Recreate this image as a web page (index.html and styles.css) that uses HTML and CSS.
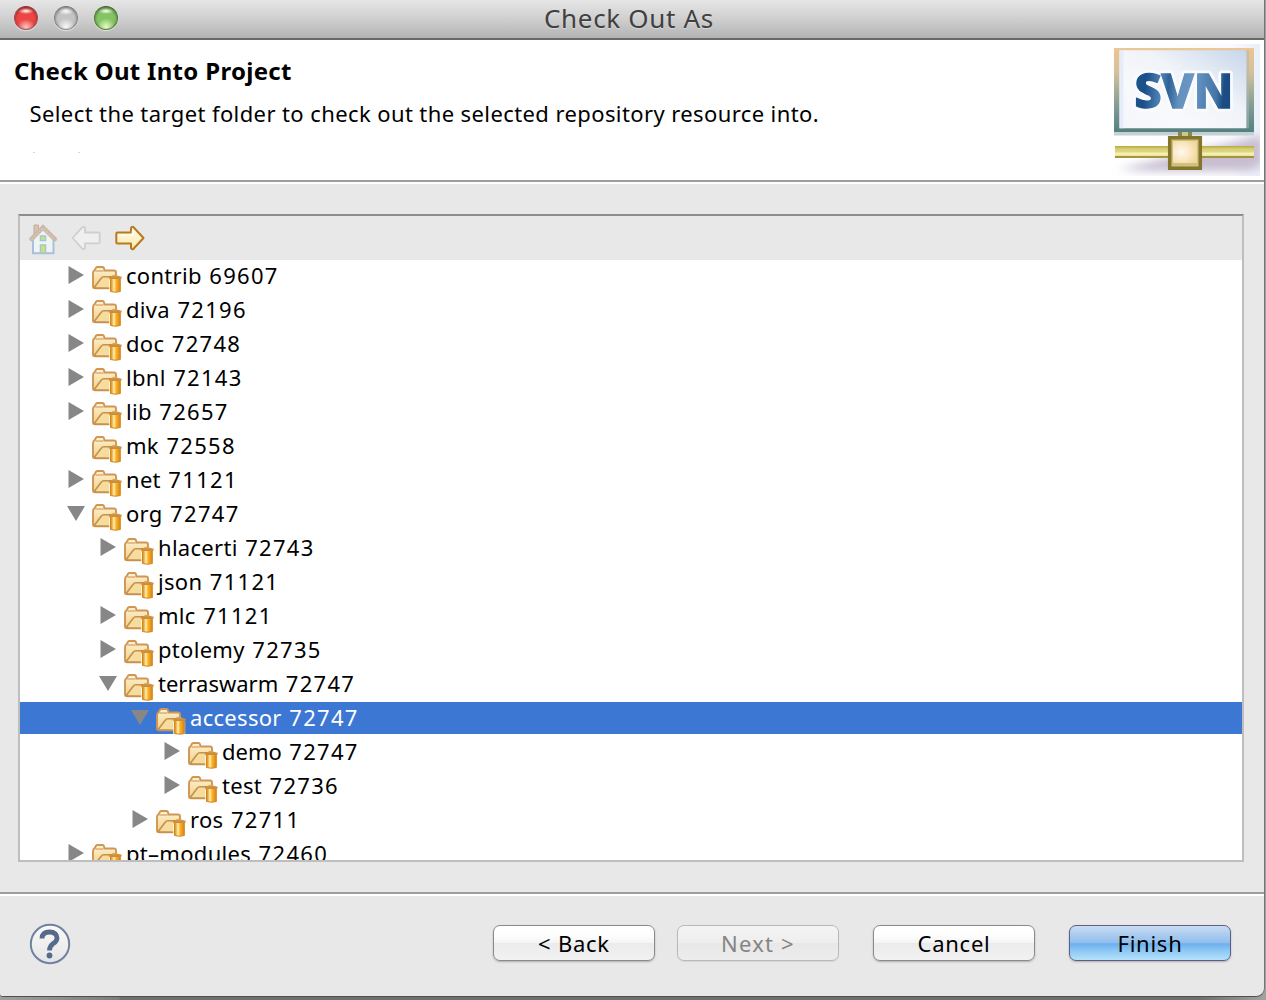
FILE: index.html
```html
<!DOCTYPE html>
<html lang="en">
<head>
<meta charset="utf-8">
<title>Check Out As</title>
<link rel="stylesheet" href="styles.css">
</head>
<body>
<svg class="defs" width="0" height="0" aria-hidden="true">
  <defs>
    <linearGradient id="paper" x1="0" y1="0" x2="0" y2="1"><stop offset="0" stop-color="#fdf3d2"/><stop offset="1" stop-color="#f3cf86"/></linearGradient>
    <linearGradient id="pale" x1="0" y1="0" x2="0" y2="1"><stop offset="0" stop-color="#fffdf0"/><stop offset="1" stop-color="#fbe9a8"/></linearGradient>
    <linearGradient id="cyl" x1="0" y1="0" x2="1" y2="0"><stop offset="0" stop-color="#d98a1c"/><stop offset=".15" stop-color="#f0a63a"/><stop offset=".35" stop-color="#fff3b8"/><stop offset=".55" stop-color="#fcb62c"/><stop offset="1" stop-color="#dc8212"/></linearGradient>
    <symbol id="folder" viewBox="0 0 30 28">
      <path d="M1 20V7q0-2 1.500-2.500L4 1.800q.5-.8 1.500-.8h5q1.200 0 1.500 1.200L12.500 4.500H22q2 0 2 2V14L20 22.200H3q-2 0-2-2z" fill="url(#paper)" stroke="#cf9655" stroke-width="1.900"/>
      <path d="M3.500 5h8" stroke="#dca567" stroke-width="1.300"/>
      <path d="M2 21.800 9 12.400q1.200-1.600 3-1.600h14.500L21 22.300z" fill="#f6dc9d" stroke="#c4914e" stroke-width="1.600"/>
      <path d="M17.200 13.500h12v13.500h-12z" fill="#fff" opacity=".85"/>
      <path d="M18.500 12.500h9.800V25.500q-4.900 1.500-9.800 0z" fill="url(#cyl)" stroke="#cf871f" stroke-width="1"/>
      <path d="M16.800 11.600h12.800" stroke="#cc8f3f" stroke-width="2.200"/>
      <path d="M20.500 9.700h5" stroke="#d9a457" stroke-width="1.600"/>
    </symbol>
  </defs>
</svg>
<div class="desktop">
<main class="window">
  <header class="titlebar">
    <div class="lights"><i class="light red"></i><i class="light gray"></i><i class="light green"></i></div>
    <span class="title">Check Out As</span>
  </header>

  <section class="banner">
    <div class="banner-text">
      <h1>Check Out Into Project</h1>
      <p>Select the target folder to check out the selected repository resource into.</p>
    </div>
    <svg class="logo" width="156" height="136" viewBox="1108 42 156 136">
      <defs>
        <linearGradient id="frame" x1="0" y1="0" x2="0" y2="1"><stop offset="0" stop-color="#ecc592"/><stop offset=".3" stop-color="#d3c09a"/><stop offset=".65" stop-color="#88a094"/><stop offset="1" stop-color="#54807f"/></linearGradient>
        <linearGradient id="screen" x1="0" y1="1" x2="1" y2="0"><stop offset="0" stop-color="#f4f6fb"/><stop offset=".3" stop-color="#f8f9fb"/><stop offset=".6" stop-color="#f0f3f8"/><stop offset="1" stop-color="#c6d6ea"/></linearGradient>
        <linearGradient id="bar" x1="0" y1="0" x2="0" y2="1"><stop offset="0" stop-color="#b5a83f"/><stop offset=".25" stop-color="#d8cf75"/><stop offset=".5" stop-color="#e0d87e"/><stop offset=".6" stop-color="#f7f3c3"/><stop offset=".8" stop-color="#ece5a0"/><stop offset=".85" stop-color="#a3953a"/><stop offset="1" stop-color="#a3953a"/></linearGradient>
        <linearGradient id="glow" x1="0" y1="0" x2="1" y2="0"><stop offset="0" stop-color="#fff"/><stop offset=".8" stop-color="#fbfbff"/><stop offset="1" stop-color="#e8eef9"/></linearGradient>
        <linearGradient id="letters" gradientUnits="userSpaceOnUse" x1="1136" y1="80" x2="1232" y2="90"><stop offset="0" stop-color="#1d548b"/><stop offset=".1" stop-color="#1b4f88"/><stop offset=".26" stop-color="#4f82b4"/><stop offset=".34" stop-color="#2f6298"/><stop offset=".46" stop-color="#6390bd"/><stop offset=".6" stop-color="#6b98c4"/><stop offset=".72" stop-color="#5585b5"/><stop offset=".84" stop-color="#4576a8"/><stop offset=".92" stop-color="#1b4c84"/><stop offset="1" stop-color="#1b4c84"/></linearGradient>
        <radialGradient id="node" cx=".35" cy=".5" r=".7"><stop offset="0" stop-color="#fff8ee"/><stop offset=".5" stop-color="#fbe8c6"/><stop offset="1" stop-color="#f0d79a"/></radialGradient>
        <filter id="soft" x="-20%" y="-50%" width="140%" height="200%"><feGaussianBlur stdDeviation="4"/></filter>
        <clipPath id="edge"><path d="M1110 44h150v132h-150z"/></clipPath>
      </defs>
      <path d="M1110 44h150v132h-150z" fill="url(#glow)"/>
      <g clip-path="url(#edge)"><path d="M1118 169 1160 160 1200 150 1262 136v30l-14 5h-96z" fill="#c8bed0" filter="url(#soft)"/></g>
      <path d="M1114 131h140v4.500h-140z" fill="#c4d2d6"/>
      <path d="M1114 48h140v84h-140z" fill="url(#frame)"/>
      <path d="M1114 48h140v2.200h-140z" fill="#ebc797"/>
      <path d="M1119.500 50.200h127v78h-127z" fill="url(#screen)"/>
      <path d="M1119.500 50.200h4v78h-4z" fill="#e6edf9"/>
      <path d="M1246.500 50.200h2.500v78h-2.500z" fill="#a9b9bc" opacity=".5"/>
      <text class="svn halo" x="1134.500" y="107.500" textLength="99" lengthAdjust="spacingAndGlyphs">SVN</text>
      <text class="svn" x="1134.500" y="107.500" textLength="99" lengthAdjust="spacingAndGlyphs" fill="url(#letters)" stroke="url(#letters)">SVN</text>
      <path d="M1178 132h14v5h-14z" fill="#8c8742"/><path d="M1182 132h6v4h-6z" fill="#c9c894"/>
      <path d="M1115 146h139v12h-139z" fill="url(#bar)"/>
      <path d="M1169.700 137.700h30.600v30.600h-30.600z" fill="#cfbf80" stroke="#83762b" stroke-width="3.500"/>
      <path d="M1173 141h24v22h-24z" fill="url(#node)"/>
    </svg>
  </section>

  <section class="body">
    <div class="panel">
      <div class="toolbar">
        <svg class="home" width="30" height="32" viewBox="28 223 30 32">
          <path d="M34 238 43 228l10 10v14.500H33.500z" fill="#eef3f3"/>
          <path d="M33 238v15.300h20.500V238" fill="none" stroke="#a9bfda" stroke-width="2"/>
          <path d="M34 225h4.500v6L34 235z" fill="#d5c3b5" stroke="#c5ad99" stroke-width="1"/>
          <path d="M31.500 239 43 227.500 54.800 239.200" fill="none" stroke="#cbb8aa" stroke-width="4.500" stroke-linecap="round"/>
          <path d="M31.500 239.500 43 228l11.500 11.500" fill="none" stroke="#dccabd" stroke-width="1.500" stroke-dasharray="2 1.500"/>
          <path d="M40.500 236h5v4.500h-5z" fill="#d3df78" stroke="#a3c8cf" stroke-width="1.500"/>
          <path d="M40.500 245h5v8h-5z" fill="#d3df78" stroke="#a3c8cf" stroke-width="1.500"/>
        </svg>
        <svg class="arrow" width="32" height="28" viewBox="0 0 32 28"><path d="M2.500 14 12.500 3.200q1.500-1 2.500.8V8.500H28.500q1.200 0 1.200 1.200v8.500q0 1.200-1.200 1.200H15V24q-1 1.800-2.500.8z" fill="#efefef" stroke="#cfcfcf" stroke-width="1.800" stroke-linejoin="round"/></svg>
        <svg class="arrow" width="32" height="28" viewBox="0 0 32 28"><path d="M29.500 14 19.500 3.200q-1.500-1-2.500.8V8.500H3.500q-1.200 0-1.200 1.200v8.500q0 1.200 1.200 1.200H17V24q1 1.800 2.500.8z" fill="url(#pale)" stroke="#b9781f" stroke-width="2" stroke-linejoin="round"/><path d="M4.500 11H18.500V6.500" fill="none" stroke="#fffbe6" stroke-width="1.500"/></svg>
      </div>
      <ul class="tree">
        <li class="row l0"><i class="tw closed"></i><svg class="folder"><use href="#folder"/></svg><span class="name">contrib</span><span class="rev">69607</span></li>
        <li class="row l0"><i class="tw closed"></i><svg class="folder"><use href="#folder"/></svg><span class="name">diva</span><span class="rev">72196</span></li>
        <li class="row l0"><i class="tw closed"></i><svg class="folder"><use href="#folder"/></svg><span class="name">doc</span><span class="rev">72748</span></li>
        <li class="row l0"><i class="tw closed"></i><svg class="folder"><use href="#folder"/></svg><span class="name">lbnl</span><span class="rev">72143</span></li>
        <li class="row l0"><i class="tw closed"></i><svg class="folder"><use href="#folder"/></svg><span class="name">lib</span><span class="rev">72657</span></li>
        <li class="row l0"><i class="tw"></i><svg class="folder"><use href="#folder"/></svg><span class="name">mk</span><span class="rev">72558</span></li>
        <li class="row l0"><i class="tw closed"></i><svg class="folder"><use href="#folder"/></svg><span class="name">net</span><span class="rev">71121</span></li>
        <li class="row l0"><i class="tw open"></i><svg class="folder"><use href="#folder"/></svg><span class="name">org</span><span class="rev">72747</span></li>
        <li class="row l1"><i class="tw closed"></i><svg class="folder"><use href="#folder"/></svg><span class="name">hlacerti</span><span class="rev">72743</span></li>
        <li class="row l1"><i class="tw"></i><svg class="folder"><use href="#folder"/></svg><span class="name">json</span><span class="rev">71121</span></li>
        <li class="row l1"><i class="tw closed"></i><svg class="folder"><use href="#folder"/></svg><span class="name">mlc</span><span class="rev">71121</span></li>
        <li class="row l1"><i class="tw closed"></i><svg class="folder"><use href="#folder"/></svg><span class="name">ptolemy</span><span class="rev">72735</span></li>
        <li class="row l1"><i class="tw open"></i><svg class="folder"><use href="#folder"/></svg><span class="name tight">terraswarm</span><span class="rev">72747</span></li>
        <li class="row l2 selected"><i class="tw open"></i><svg class="folder"><use href="#folder"/></svg><span class="name">accessor</span><span class="rev">72747</span></li>
        <li class="row l3"><i class="tw closed"></i><svg class="folder"><use href="#folder"/></svg><span class="name tight">demo</span><span class="rev">72747</span></li>
        <li class="row l3"><i class="tw closed"></i><svg class="folder"><use href="#folder"/></svg><span class="name">test</span><span class="rev">72736</span></li>
        <li class="row l2"><i class="tw closed"></i><svg class="folder"><use href="#folder"/></svg><span class="name">ros</span><span class="rev">72711</span></li>
        <li class="row l0"><i class="tw closed"></i><svg class="folder"><use href="#folder"/></svg><span class="name">pt–modules</span><span class="rev">72460</span></li>
      </ul>
    </div>
  </section>

  <footer class="footer">
    <svg class="help" width="42" height="42" viewBox="0 0 42 42">
      <defs><linearGradient id="hg" x1="0" y1="0" x2="0" y2="1"><stop offset="0" stop-color="#fafafa"/><stop offset="1" stop-color="#e4e4e4"/></linearGradient></defs>
      <circle cx="21" cy="21" r="19.200" fill="url(#hg)" stroke="#6f80a0" stroke-width="2"/>
      <path d="M13 15.500Q13 9 20.500 9 28 9 28 15 28 18.500 24 20.700 20.500 23 20.500 27.500" fill="none" stroke="#566a8c" stroke-width="4.800"/>
      <circle cx="20.500" cy="32.500" r="2.900" fill="#566a8c"/>
    </svg>
    <div class="buttons">
      <button class="btn">&lt; Back</button>
      <button class="btn next" disabled>Next &gt;</button>
      <button class="btn">Cancel</button>
      <button class="btn primary">Finish</button>
    </div>
  </footer>
</main>
</div>
</body>
</html>
```
FILE: styles.css
```css
* { box-sizing: border-box; }

body {
  margin: 0;
  font: 22px/32px "Noto Sans", "Open Sans", sans-serif;
  color: #000;
}

.defs { position: absolute; }

.desktop {
  width: 1266px;
  height: 1000px;
  overflow: hidden;
  background: linear-gradient(90deg, #a0a0a0 0, #7d7d7d 119px, #6f6f6f 120px, #6f6f6f 1200px, #a2a2a2 1266px);
}

.window {
  display: flex;
  flex-direction: column;
  width: 1265px;
  height: 997px;
  background: #e8e8e8;
  border-right: 1px solid #747474;
  border-bottom: 1px solid #505050;
  border-radius: 0 0 9px 3px;
  overflow: hidden;
}

.titlebar {
  display: grid;
  grid-template-columns: 1fr auto 1fr;
  flex: none;
  height: 40px;
  padding: 0 13px 0 7px;
  border-bottom: 2px solid #696969;
  background: linear-gradient(#e6e6e6, #cfcfcf 50%, #b3b3b3);
}

.title {
  font-size: 26px;
  line-height: 36px;
  letter-spacing: .68px;
  color: #404040;
  text-shadow: 0 1px 1px rgba(255, 255, 255, .4);
}

.lights { display: flex; gap: 16px; padding: 6px 0 0 7px; }

.light {
  width: 24px;
  height: 24px;
  border-radius: 50%;
  border: 1.5px solid;
  box-shadow: 0 1px 1px rgba(255, 255, 255, .6), inset 0 1px 3px rgba(0, 0, 0, .45);
}

.red {
  border-color: #8e3434 #a14c4c #9b6060;
  background: radial-gradient(ellipse 8px 3px at 50% 18%, #fff, transparent), radial-gradient(ellipse 9px 8px at 50% 92%, #ffc9c5, transparent), #ec4744;
}

.gray {
  border-color: #757575 #858585 #8d8d8d;
  background: radial-gradient(ellipse 8px 4px at 50% 18%, #fff, transparent), radial-gradient(ellipse 9px 9px at 50% 92%, #fafafa, transparent), #c4c4c4;
}

.green {
  border-color: #386326 #4c7a38 #5d7d48;
  background: radial-gradient(ellipse 8px 3px at 50% 18%, #fff, transparent), radial-gradient(ellipse 9px 9px at 50% 92%, #ecffc8, transparent), #84c463;
}

.banner {
  display: flex;
  justify-content: space-between;
  flex: none;
  height: 142px;
  border-bottom: 2px solid #9d9d9d;
  background:
    linear-gradient(#d8d8d8, #d8d8d8) 33px 112px / 2px 1px no-repeat,
    linear-gradient(#d8d8d8, #d8d8d8) 78px 112px / 2px 1px no-repeat,
    #fff;
}

.banner-text { padding: 14px 0 0 14px; }

h1 {
  margin: 0;
  font-size: 24px;
  line-height: 33px;
  font-weight: 700;
  letter-spacing: .3px;
}

p {
  margin: 11px 0 0 15.500px;
  line-height: 30px;
  letter-spacing: .4px;
}

.logo { margin-top: 2px; }

.svn { font: 800 48px "Noto Sans", "Open Sans", sans-serif; stroke-width: 1.5px; }
.halo { fill: #fafbfd; stroke: #fafbfd; stroke-width: 7px; stroke-linejoin: round; }

.body {
  flex: none;
  height: 712px;
  padding: 30px 20px 0 18px;
  border-top: 2px solid #fff;
  border-bottom: 2px solid #9d9d9d;
}

.panel {
  display: flex;
  flex-direction: column;
  height: 648px;
  border: 2px solid #bebebe;
  border-top-color: #8d8d8d;
}

.toolbar {
  display: flex;
  flex: none;
  height: 44px;
  padding: 7px 0 0 8px;
}

.arrow { margin-top: 1px; }
.home + .arrow { margin: 1px 12px 0 12px; }

.tree {
  flex: 1;
  min-height: 0;
  margin: 0;
  padding: 0;
  list-style: none;
  background: #fff;
  overflow: hidden;
}

.row {
  display: flex;
  height: 32px;
  margin-bottom: 2px;
  padding-left: 47px;
  line-height: 30px;
  white-space: nowrap;
}

.l1 { padding-left: 79px; }
.l2 { padding-left: 111px; }
.l3 { padding-left: 143px; }

.selected { background: #3c77d4; color: #fff; }

.tw { width: 18px; height: 16px; margin: 7px 7px 0 0; flex: none; }
.closed { background: #878787; clip-path: polygon(1.500px 0, 17px 9px, 1.500px 18px); height: 18px; margin-top: 6px; }
.open { background: #878787; clip-path: polygon(0 0, 18px 0, 9px 15px); margin-top: 8px; }

.folder { width: 30px; height: 28px; margin: 6px 4px 0 0; flex: none; }

.name { letter-spacing: .3px; }
.tight { letter-spacing: 0; }
.rev { margin-left: 7.500px; letter-spacing: 1.300px; }

.footer {
  display: flex;
  justify-content: space-between;
  flex: 1;
  padding: 28px 33px 0 29px;
  border-top: 2px solid #fff;
}

.help { margin-top: -1px; }

.buttons { display: flex; gap: 34px; padding-top: 1px; }

.btn {
  width: 162px;
  height: 36px;
  padding: 0;
  border: 1.500px solid #8a8a8a;
  border-radius: 7px;
  background: linear-gradient(#fff 0, #fdfdfd 30%, #f4f4f4 49%, #ebebeb 51%, #f2f2f2);
  box-shadow: 0 1px 2px rgba(0, 0, 0, .25);
  font: 22px/32px "Noto Sans", "Open Sans", sans-serif;
  letter-spacing: .75px;
  color: #000;
}

.next {
  margin-left: -12px;
  border-color: #b9b9b9;
  background: linear-gradient(#f4f4f4, #eee 49%, #e8e8e8 51%, #ececec);
  box-shadow: 0 1px 1px rgba(0, 0, 0, .08);
  color: #858585;
  letter-spacing: 1.200px;
}

.primary {
  border-color: #5c6085;
  background: linear-gradient(#c9dcf3, #a6c9ee 30%, #8fbeee 50%, #6caeee 52%, #90caf5 75%, #b5e2fa);
}
```
